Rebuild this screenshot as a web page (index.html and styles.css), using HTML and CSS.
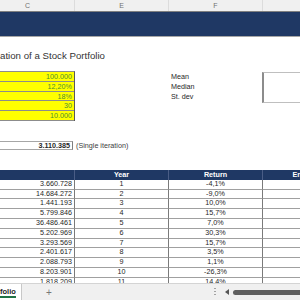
FILE: index.html
```html
<!DOCTYPE html>
<html lang="en">
<head>
    <meta charset="UTF-8" />
    <title>Monte Carlo Simulation of a Stock Portfolio</title>
    <link rel="stylesheet" href="styles.css">
</head>
<body>
    <main class="sheet">
        <div class="colhead">
            <div class="ch ch-c">C</div>
            <div class="ch ch-e">E</div>
            <div class="ch ch-f">F</div>
            <div class="ch ch-g"></div>
        </div>

        <div class="banner"></div>

        <div class="title-row">
            <h1 class="title">ation of a Stock Portfolio</h1>
        </div>

        <section class="inputs">
            <div class="input-col">
                <div class="input">100.000</div>
                <div class="input">12,20%</div>
                <div class="input">18%</div>
                <div class="input">30</div>
                <div class="input">10.000</div>
            </div>
            <div class="empty-col"></div>
            <div class="stats">
                <div class="stat">Mean</div>
                <div class="stat">Median</div>
                <div class="stat">St. dev</div>
            </div>
            <div class="stat-box-col">
                <div class="stat-box"></div>
            </div>
        </section>

        <div class="gap"></div>

        <div class="result-row">
            <div class="result">3.110.385</div>
            <span class="note">(Single iteration)</span>
        </div>

        <div class="gap"></div>

        <div class="sim">
            <div class="cell head"></div>
            <div class="cell head">Year</div>
            <div class="cell head">Return</div>
            <div class="cell head">End value</div>

            <div class="cell value">3.660.728</div><div class="cell">1</div><div class="cell">-4,1%</div><div class="cell"></div>
            <div class="cell value">14.684.272</div><div class="cell">2</div><div class="cell">-9,0%</div><div class="cell"></div>
            <div class="cell value">1.441.193</div><div class="cell">3</div><div class="cell">10,0%</div><div class="cell"></div>
            <div class="cell value">5.799.846</div><div class="cell">4</div><div class="cell">15,7%</div><div class="cell"></div>
            <div class="cell value">36.486.461</div><div class="cell">5</div><div class="cell">7,0%</div><div class="cell"></div>
            <div class="cell value">5.202.969</div><div class="cell">6</div><div class="cell">30,3%</div><div class="cell"></div>
            <div class="cell value">3.293.569</div><div class="cell">7</div><div class="cell">15,7%</div><div class="cell"></div>
            <div class="cell value">2.401.617</div><div class="cell">8</div><div class="cell">3,5%</div><div class="cell"></div>
            <div class="cell value">2.088.793</div><div class="cell">9</div><div class="cell">1,1%</div><div class="cell"></div>
            <div class="cell value">8.203.901</div><div class="cell">10</div><div class="cell">-26,3%</div><div class="cell"></div>
            <div class="cell value">1.818.209</div><div class="cell">11</div><div class="cell">14,4%</div><div class="cell"></div>
        </div>
    </main>

    <footer class="tabs">
        <div class="tab"><span class="tab-name">folio</span></div>
        <span class="add">+</span>
        <div class="scroll">
            <svg class="dots" viewBox="0 0 2 8" aria-hidden="true">
                <rect x="0.5" y="0" width="1" height="1" fill="#555" />
                <rect x="0.5" y="3" width="1" height="1" fill="#555" />
                <rect x="0.5" y="6" width="1" height="1" fill="#555" />
            </svg>
            <svg class="arrow" viewBox="0 0 4 6" aria-hidden="true">
                <polygon points="4,0 4,6 0,3" fill="#555" />
            </svg>
            <div class="thumb"></div>
        </div>
    </footer>
</body>
</html>
```

FILE: styles.css
```css
/* Reset */
*, *::before, *::after {
    box-sizing: border-box;
}

html, body {
    margin: 0;
}

body {
    width: 300px;
    height: 300px;
    overflow: hidden;
    display: flex;
    flex-direction: column;
    font-family: 'Liberation Sans', Arial, sans-serif;
    font-size: 7.2px;
    color: #262626;
    background: #fff;
}

.sheet {
    flex: none;
    height: 283px;
    overflow: hidden;
}

/* Column letters */
.colhead {
    display: flex;
    height: 11px;
    background: #f0f0f0;
    color: #707070;
    font-size: 7px;
    line-height: 11px;
}

.ch {
    flex: none;
    text-align: center;
    border-right: 1px solid #dcdcdc;
}

.ch-c {
    width: 75px;
    padding-right: 19px;
}

.ch-e, .ch-f {
    width: 94px;
}

.ch-g {
    flex: 1;
    border-right: 0;
}

.banner {
    height: 26px;
    background: #1f3864;
    border-top: 1px solid #808080;
    border-bottom: 1px solid #a6a6a6;
}

.title-row {
    height: 34px;
    padding-top: 13px;
}

.title {
    margin: 0;
    font-size: 9.7px;
    font-weight: normal;
    line-height: 12px;
    color: #333;
    white-space: nowrap;
}

/* Inputs and statistics */
.inputs {
    display: flex;
}

.input-col {
    width: 75px;
    background: #ffff00;
    border-top: 1px solid #8c8c8c;
    border-right: 1px solid #595959;
}

.input {
    height: 9.8px;
    line-height: 9px;
    text-align: right;
    padding-right: 2px;
    color: #4e8f2f;
    border-bottom: 1px solid #8c8c8c;
}

.empty-col {
    width: 94px;
}

.stats {
    width: 93px;
    padding: 1px 0 0 2px;
}

.stat {
    height: 9.8px;
    line-height: 9.8px;
}

.stat-box-col {
    flex: 1;
    padding-top: 1px;
}

.stat-box {
    height: 31px;
    border: 1px solid #bfbfbf;
    border-left: 2px solid #8c8c8c;
    border-right: 0;
}

.gap {
    height: 19.6px;
}

.result-row {
    display: flex;
    align-items: center;
    height: 9.8px;
}

.result {
    width: 73px;
    height: 100%;
    border: 1px solid #a6a6a6;
    border-left: 0;
    border-right: 1.5px solid #7f7f7f;
    padding-right: 2px;
    text-align: right;
    font-weight: bold;
    line-height: 8px;
}

.note {
    padding-left: 3px;
    color: #404040;
}

/* Simulation table */
.sim {
    display: grid;
    grid-template-columns: 75px 94px 94px 94px;
    grid-auto-rows: 9.8px;
    width: 357px;
}

.cell {
    padding: 0 2px;
    line-height: 8.8px;
    text-align: center;
    white-space: nowrap;
    overflow: hidden;
    border-bottom: 1px solid #a0a0a0;
    border-right: 1.5px solid #7a7a7a;
}

.cell.value {
    text-align: right;
}

.cell.head {
    background: #1f3864;
    color: #fff;
    font-weight: bold;
    border-bottom: 0;
    border-right: 1px solid #4a5d86;
    line-height: 9.8px;
}

/* Sheet tabs */
.tabs {
    flex: none;
    height: 17px;
    display: flex;
    align-items: center;
    background: #f0f0f0;
    border-top: 1px solid #d4d4d4;
    font-size: 7.5px;
}

.tab {
    width: 22px;
    height: 100%;
    display: flex;
    align-items: center;
    background: #fff;
    border-right: 1px solid #c8c8c8;
    font-weight: bold;
    color: #1d1d1d;
}

.tab-name {
    line-height: 9px;
    border-bottom: 2px solid #217346;
}

.add {
    margin-left: 24px;
    color: #777;
    font-size: 10px;
}

.scroll {
    margin-left: auto;
    display: flex;
    align-items: center;
}

.dots {
    width: 2px;
    height: 8px;
    margin-right: 9px;
}

.arrow {
    width: 4px;
    height: 6px;
}

.thumb {
    width: 67px;
    height: 5px;
    margin-left: 4px;
    background: #5f5f5f;
    border-radius: 3px 0 0 3px;
}
```
